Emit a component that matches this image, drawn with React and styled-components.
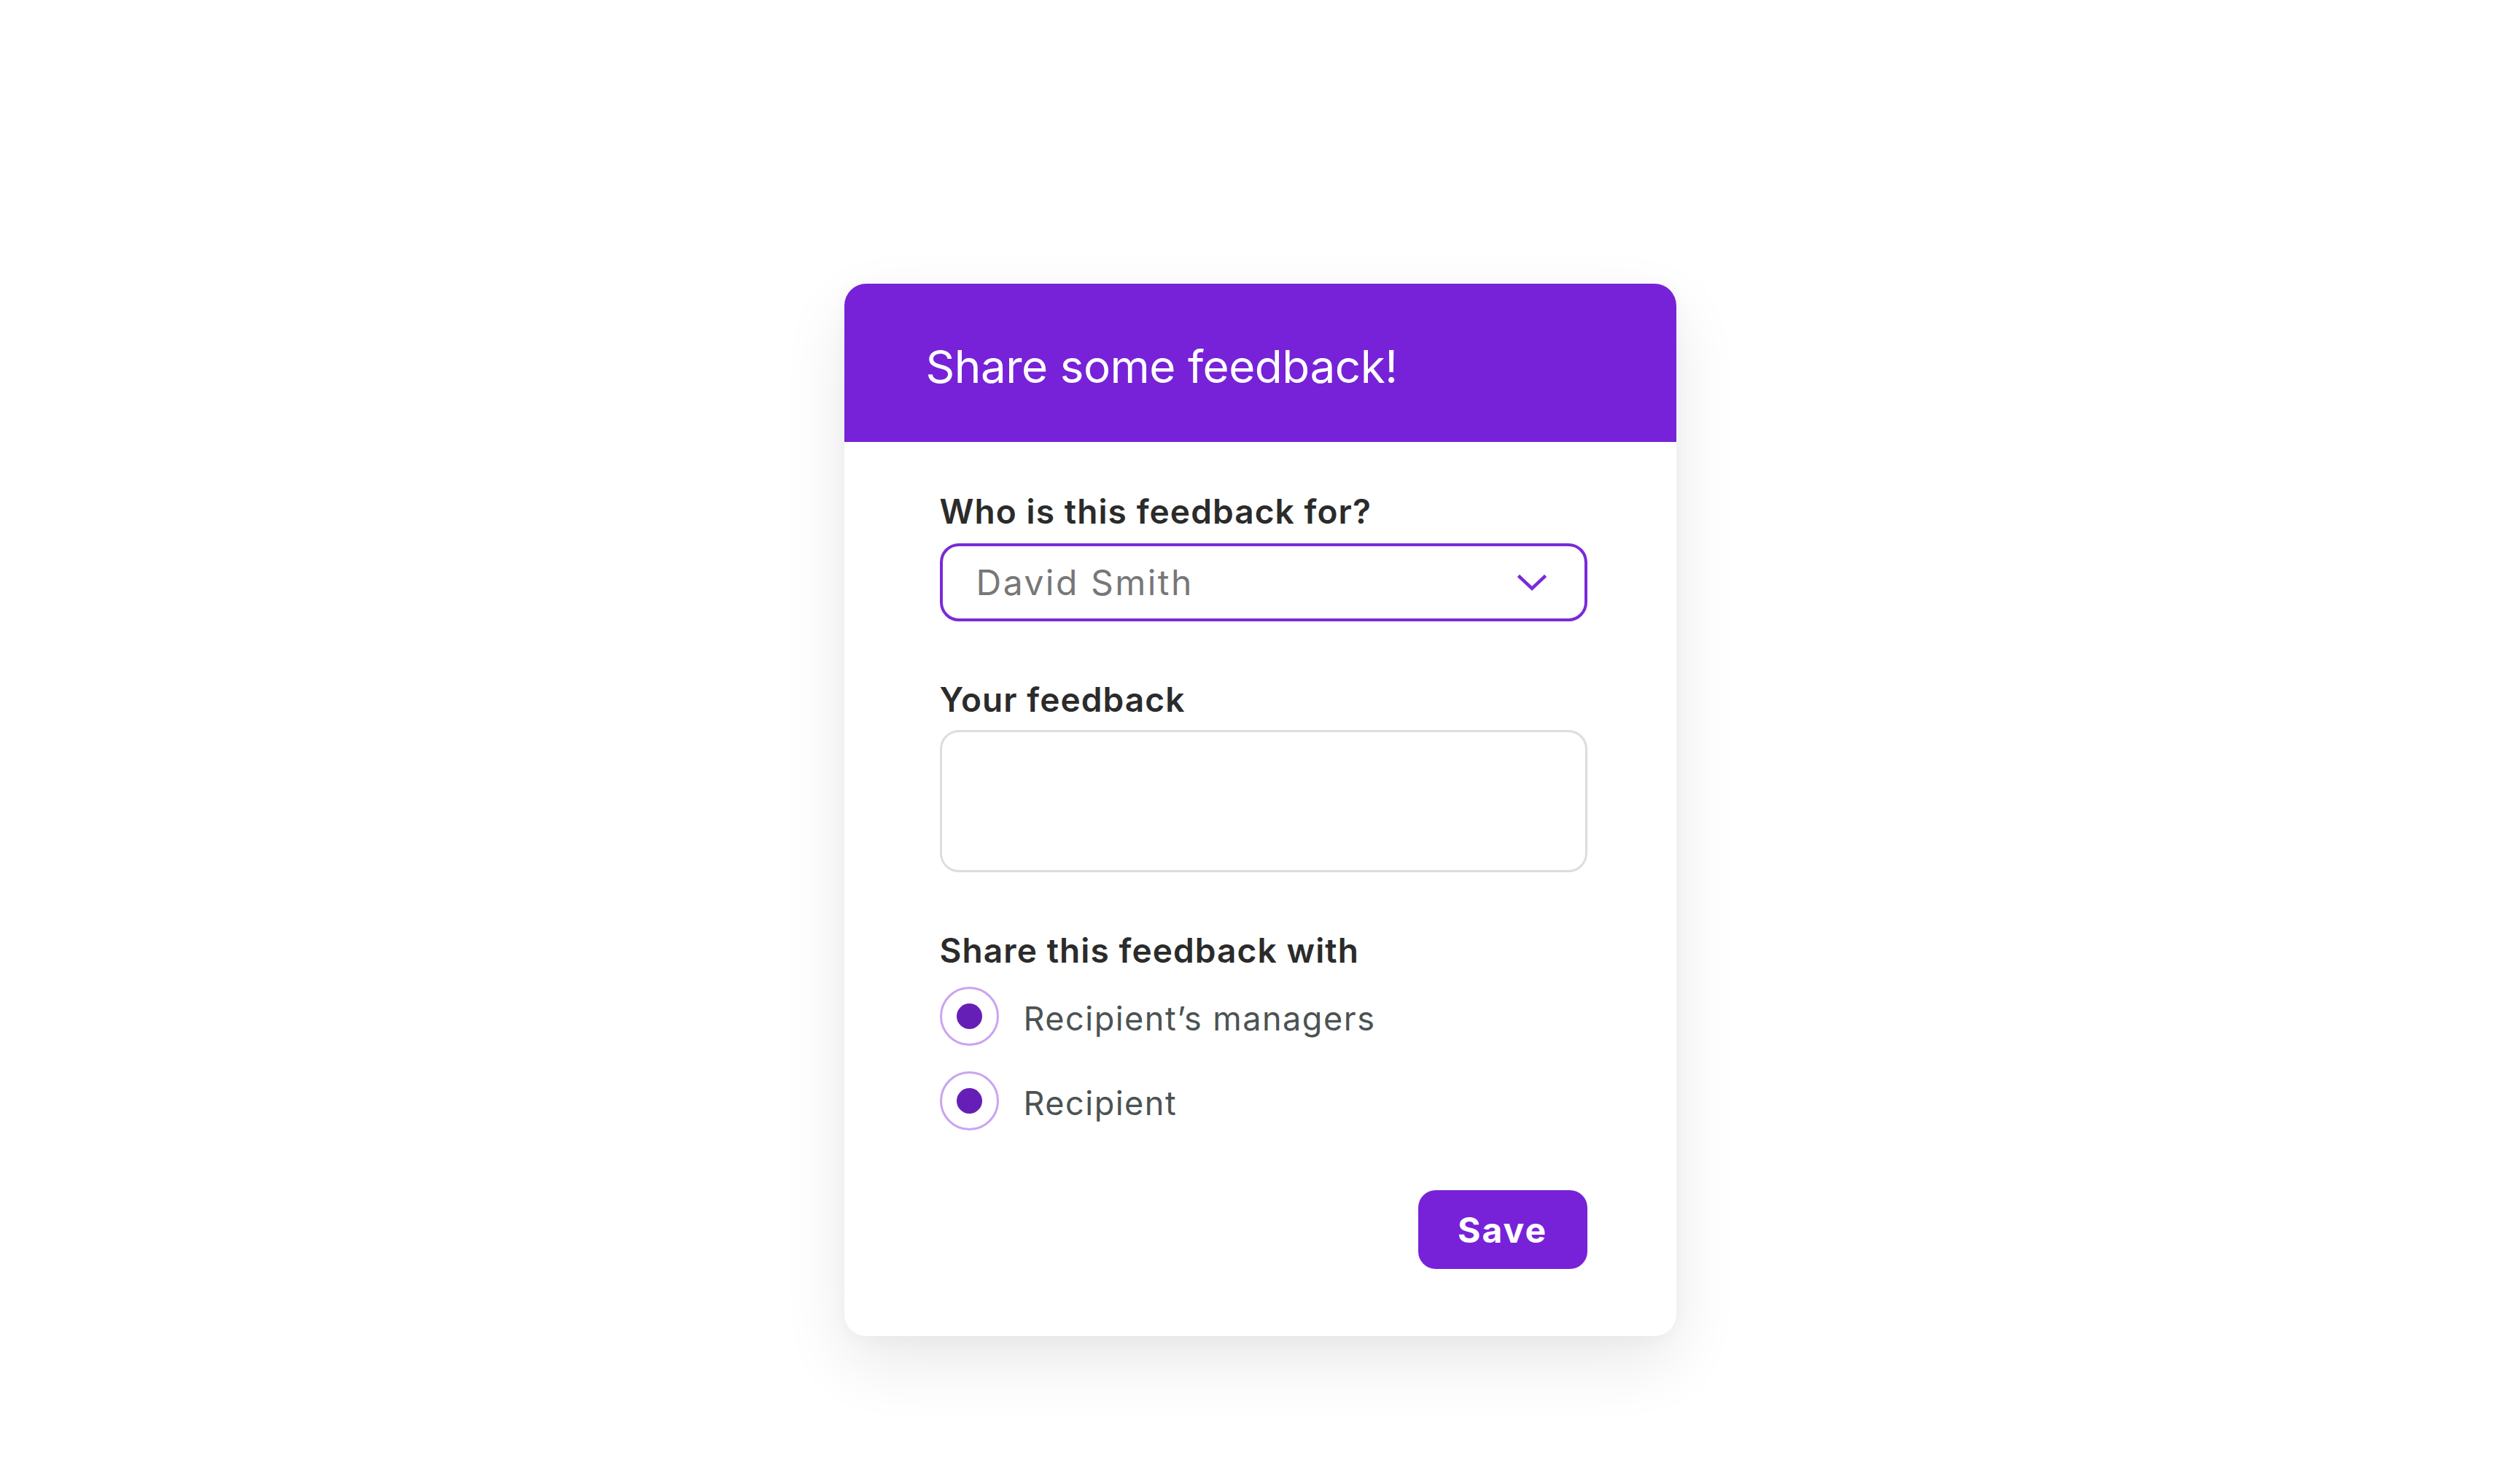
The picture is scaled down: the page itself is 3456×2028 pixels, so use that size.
import { useState } from "react";
import styled, { createGlobalStyle } from "styled-components";

const GlobalStyle = createGlobalStyle`
  html, body {
    margin: 0;
    padding: 0;
    background: #ffffff;
    font-family: Inter, "Noto Sans", "Liberation Sans", sans-serif;
  }
  * {
    box-sizing: border-box;
  }
`;

const Page = styled.div`
  min-height: 100vh;
  display: flex;
  justify-content: center;
  align-items: flex-start;
  padding-top: 389px;
`;

const Card = styled.div`
  width: 1141px;
  background: #ffffff;
  border-radius: 30px;
  overflow: hidden;
  box-shadow: 0 36px 90px rgba(0, 0, 0, 0.09), 0 4px 24px rgba(0, 0, 0, 0.03);
`;

const Header = styled.div`
  height: 217px;
  background-color: #7722d8;
  display: flex;
  align-items: center;
  padding: 10px 0 0 112px;
`;

const Title = styled.h1`
  margin: 0;
  font-size: 62px;
  font-weight: 400;
  color: #ffffff;
  letter-spacing: -0.5px;
`;

const Body = styled.form`
  display: flex;
  flex-direction: column;
  padding: 68px 122px 92px 131px;
`;

const Field = styled.div`
  display: flex;
  flex-direction: column;
  margin-bottom: ${(p) => p.$gap || 0}px;
`;

const Label = styled.label`
  font-size: 46px;
  line-height: 54px;
  font-weight: 600;
  color: #2b2b2b;
  letter-spacing: 1.1px;
  margin-bottom: ${(p) => p.$space || 17}px;
`;

const Select = styled.div`
  height: 107px;
  border: 4px solid #7a2ad8;
  border-radius: 26px;
  display: flex;
  align-items: center;
  justify-content: space-between;
  padding: 0 52px 0 46px;
  cursor: pointer;

  & svg {
    width: 40px;
    height: 24px;
  }
`;

const SelectValue = styled.span`
  font-size: 48px;
  color: #777777;
  letter-spacing: 2.5px;
`;

const TextArea = styled.textarea`
  height: 195px;
  border: 3px solid #dddddd;
  border-radius: 26px;
  resize: none;
  outline: none;
  padding: 24px 40px;
  font-family: inherit;
  font-size: 45px;
  color: #2b2b2b;
`;

const RadioList = styled.div`
  display: flex;
  flex-direction: column;
  gap: 35px;
`;

const RadioRow = styled.div`
  display: flex;
  align-items: center;
  gap: 34px;
  cursor: pointer;
`;

const RadioOuter = styled.span`
  width: 81px;
  height: 81px;
  border-radius: 50%;
  border: 3px solid #c9a5f0;
  display: flex;
  align-items: center;
  justify-content: center;
  flex-shrink: 0;
`;

const RadioDot = styled.span`
  width: 35px;
  height: 35px;
  border-radius: 50%;
  background-color: ${(p) => (p.$on ? "#661fb6" : "transparent")};
`;

const RadioText = styled.span`
  font-size: 45px;
  line-height: 54px;
  color: #4b5353;
  letter-spacing: 1.5px;
  padding-top: 6px;
`;

const Actions = styled.div`
  display: flex;
  justify-content: flex-end;
  margin-top: 82px;
`;

const SaveButton = styled.button`
  width: 232px;
  height: 108px;
  border: none;
  border-radius: 24px;
  background-color: #7722d8;
  color: #ffffff;
  font-family: inherit;
  font-size: 48px;
  font-weight: 700;
  letter-spacing: 2px;
  cursor: pointer;
`;

function Chevron() {
  return (
    <svg viewBox="0 0 40 24" fill="none">
      <path
        d="M3 4 L20 20 L37 4"
        stroke="#7a2ad8"
        strokeWidth="4.5"
        strokeLinecap="square"
      />
    </svg>
  );
}

const options = ["Recipient\u2019s managers", "Recipient"];

function App() {
  const [shared, setShared] = useState({
    "Recipient\u2019s managers": true,
    Recipient: true,
  });

  const toggle = (key) => setShared((s) => ({ ...s, [key]: !s[key] }));

  return (
    <>
      <GlobalStyle />
      <Page>
        <Card>
          <Header>
            <Title>Share some feedback!</Title>
          </Header>
          <Body onSubmit={(e) => e.preventDefault()}>
            <Field $gap={80}>
              <Label>Who is this feedback for?</Label>
              <Select>
                <SelectValue>David Smith</SelectValue>
                <Chevron />
              </Select>
            </Field>
            <Field $gap={80}>
              <Label $space={15}>Your feedback</Label>
              <TextArea />
            </Field>
            <Field>
              <Label $space={23}>Share this feedback with</Label>
              <RadioList>
                {options.map((opt) => (
                  <RadioRow key={opt} onClick={() => toggle(opt)}>
                    <RadioOuter>
                      <RadioDot $on={shared[opt]} />
                    </RadioOuter>
                    <RadioText>{opt}</RadioText>
                  </RadioRow>
                ))}
              </RadioList>
            </Field>
            <Actions>
              <SaveButton type="submit">Save</SaveButton>
            </Actions>
          </Body>
        </Card>
      </Page>
    </>
  );
}

export default App;
